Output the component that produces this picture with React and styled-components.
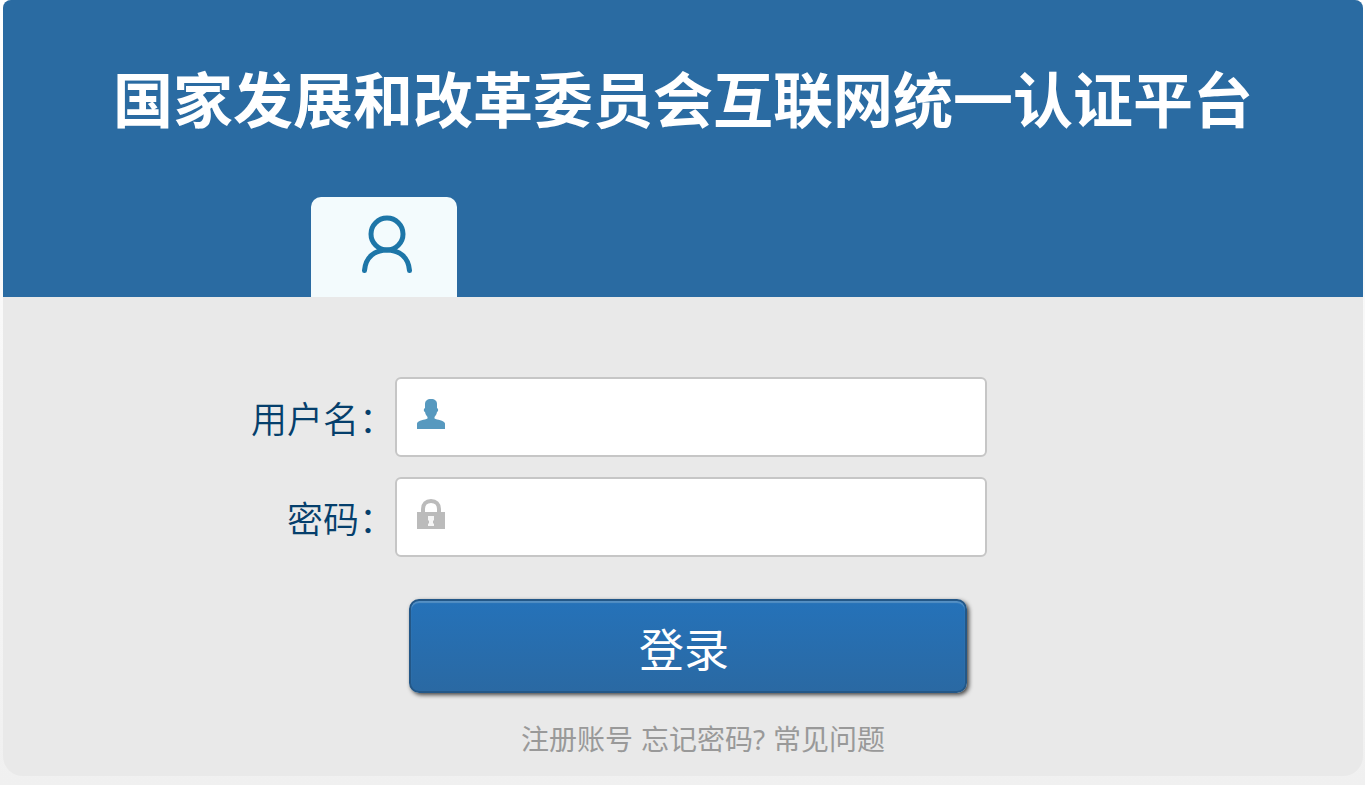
import React, { useState } from "react";
import styled, { createGlobalStyle } from "styled-components";

const GlobalStyle = createGlobalStyle`
  * {
    box-sizing: border-box;
  }

  body {
    margin: 0;
    min-height: 100vh;
    background: linear-gradient(#ffffff, #f0f0f0) no-repeat #f0f0f0;
    font-family: "Noto Sans", "Noto Sans CJK SC", sans-serif;
  }
`;

const Card = styled.main`
  margin: 0 2px 0 3px;
  background: #e9e9e9;
  border-radius: 8px 8px 20px 20px;
  overflow: hidden;
`;

const Header = styled.header`
  display: flex;
  flex-direction: column;
  justify-content: space-between;
  min-height: 297px;
  padding-top: 57px;
  background: #2a6ba2;
`;

const Title = styled.h1`
  margin: 0;
  color: #ffffff;
  font-family: "Noto Sans CJK SC", sans-serif;
  font-size: 60px;
  font-weight: 700;
  line-height: 80px;
  text-align: center;
`;

const Columns = styled.div`
  display: grid;
  grid-template-columns: 308fr 1052fr;
`;

const Tab = styled.button`
  grid-column: 2;
  display: flex;
  justify-content: center;
  width: 146px;
  height: 100px;
  padding: 18px 0 0 6px;
  border: none;
  border-radius: 10px 10px 0 0;
  background: #f3fbfd;
  cursor: pointer;
`;

const Form = styled.form`
  display: grid;
  grid-template-columns: 392fr 592fr 376fr;
  row-gap: 20px;
  padding: 80px 0 17px;
`;

const Label = styled.label`
  grid-column: 1;
  color: #053f6c;
  font-family: "Noto Sans CJK SC", sans-serif;
  font-size: 36px;
  font-weight: 350;
  line-height: 80px;
  text-align: right;
  white-space: nowrap;
`;

const Field = styled.div`
  grid-column: 2;
  display: flex;
  align-items: flex-start;
  gap: 14px;
  height: 80px;
  padding: 20px;
  border: 2px solid #c6c6c6;
  border-radius: 6px;
  background: #ffffff;

  &:focus-within {
    border-color: #5497bd;
  }

  svg {
    flex: none;
  }
`;

const Input = styled.input`
  flex: 1;
  min-width: 0;
  height: 36px;
  padding: 0;
  border: none;
  outline: none;
  background: transparent;
  color: #333333;
  font-family: inherit;
  font-size: 28px;
`;

const Actions = styled.div`
  grid-column: 2;
  padding: 22px 20px 0 14px;
`;

const LoginButton = styled.button`
  display: block;
  width: 100%;
  height: 94px;
  padding: 4px 8px 0 0;
  border: 2px solid #235787;
  border-radius: 10px;
  background: linear-gradient(#2572b9, #2a69a3);
  box-shadow: 2px 2px 4px #444444, inset 0 2px 1px #5590c4;
  color: #ffffff;
  font-family: "Noto Sans CJK SC", sans-serif;
  font-size: 45px;
  line-height: 60px;
  cursor: pointer;
`;

const Links = styled.nav`
  grid-column: 2;
  display: flex;
  justify-content: center;
  gap: 8px;
  padding: 6px 0 0 24px;
`;

const TextLink = styled.a`
  color: #999999;
  font-size: 28px;
  font-weight: 400;
  line-height: 40px;
  text-decoration: none;
  white-space: nowrap;
`;

const PersonOutline = () => (
  <svg width="54" height="60" viewBox="0 0 54 60" fill="none" stroke="#1d76a8" strokeWidth="5" aria-hidden="true">
    <circle cx="27" cy="19" r="16" />
    <path d="M4.500 55.500C5.500 42 15 35 27 35s21.500 7 22.500 20.500" strokeLinecap="round" />
  </svg>
);

const UserIcon = () => (
  <svg width="28" height="30" viewBox="0 0 28 30" fill="#5799bf" aria-hidden="true">
    <path d="M8 5C8 2 10 0 14 0S20 2 20 5V9C22 10 21 13 20 13C19.500 16 18 17 17.500 18V19.500C20 21 27 21 28 24.500V30H0V24.500C1 21 8 21 10.500 19.500V18C10 17 8.500 16 8 13C7 13 6 10 8 9Z" />
  </svg>
);

const LockIcon = () => (
  <svg width="28" height="30" viewBox="0 0 28 30" aria-hidden="true">
    <path d="M6 15V10C6 5 9 2 14 2S22 5 22 10V15" fill="none" stroke="#bbbbbb" strokeWidth="4" />
    <path d="M0 13H28V30H0Z" fill="#bbbbbb" />
    <path d="M11 17H17V21L16 22V24L17 25V27H11V25L12 24V22L11 21Z" fill="#f6f6f6" />
  </svg>
);

const links = ["注册账号", "忘记密码?", "常见问题"];

const App = () => {
  const [username, setUsername] = useState("");
  const [password, setPassword] = useState("");

  return (
    <>
      <GlobalStyle />
      <Card>
        <Header>
          <Title>国家发展和改革委员会互联网统一认证平台</Title>
          <Columns>
            <Tab type="button" aria-label="用户登录">
              <PersonOutline />
            </Tab>
          </Columns>
        </Header>
        <Form onSubmit={(e) => e.preventDefault()}>
          <Label htmlFor="username">用户名：</Label>
          <Field>
            <UserIcon />
            <Input id="username" type="text" value={username} onChange={(e) => setUsername(e.target.value)} />
          </Field>
          <Label htmlFor="password">密码：</Label>
          <Field>
            <LockIcon />
            <Input id="password" type="password" value={password} onChange={(e) => setPassword(e.target.value)} />
          </Field>
          <Actions>
            <LoginButton type="submit">登录</LoginButton>
          </Actions>
          <Links>
            {links.map((text) => (
              <TextLink href="#" key={text}>{text}</TextLink>
            ))}
          </Links>
        </Form>
      </Card>
    </>
  );
};

export default App;
